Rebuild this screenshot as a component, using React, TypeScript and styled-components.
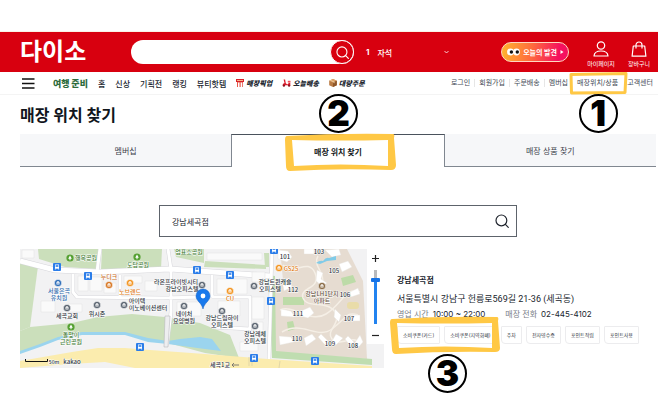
import React from "react";
import styled, { createGlobalStyle, css } from "styled-components";

const Global = createGlobalStyle`
  * { box-sizing: border-box; }
  body {
    margin: 0;
    background: #fff;
    color: #20252e;
    font-family: Inter, "Noto Sans CJK KR", sans-serif;
  }
  button, input { font: inherit; color: inherit; border: 0; padding: 0; margin: 0; background: none; }
  button { cursor: pointer; }
  a { color: inherit; text-decoration: none; }
  h1, h2, p, ul, dl, dd { margin: 0; padding: 0; }
  ul { list-style: none; }
  svg { display: block; flex: none; }
`;

const red = "#d8000f";
const marker = "#ffc845";

const Page = styled.div`
  min-height: 100vh;
  padding-top: 31px;
`;

const Header = styled.header`
  display: flex;
  align-items: center;
  height: 41px;
  padding: 0 5px 0 20px;
  border-top: 1px solid #fbf3e4;
  background: ${red};
  color: #fff;
`;

const Logo = styled.a`
  width: 111px;
  font-size: 24px;
  line-height: 40px;
  font-weight: 700;
`;

const SearchPill = styled.form`
  display: flex;
  flex: 0 1 223px;
  height: 24px;
  border-radius: 12px;
  background: #fff;
`;

const PillInput = styled.input`
  flex: 1;
  min-width: 0;
  padding-left: 12px;
  font-size: 9px;
  color: #222;
  outline: none;
`;

const PillButton = styled.button`
  display: grid;
  place-items: center;
  width: 24px;
  height: 24px;
  border: 1px solid #fff;
  border-radius: 50%;
  background: ${red};
`;

const Keyword = styled.button`
  display: flex;
  align-items: center;
  gap: 8px;
  flex: 0 1 83px;
  margin-left: 12px;
  font-size: 8px;
  font-weight: 500;

  svg { margin-left: auto; }
`;

const Discover = styled.a`
  display: flex;
  align-items: center;
  gap: 3px;
  height: 20px;
  margin-left: auto;
  padding: 0 4px 0 5px;
  border: 1px solid #ffd9c0;
  border-radius: 10px;
  background: linear-gradient(100deg, #ffb62e, #ff6a3d 45%, #f5105f 85%);
  font-size: 7px;
  font-weight: 700;
  white-space: nowrap;
`;

const IconLink = styled.a`
  display: flex;
  flex-direction: column;
  align-items: center;
  gap: 3px;
  width: 28px;
  padding-top: 4px;
  font-size: 6px;
  line-height: 8px;
  white-space: nowrap;
`;

const IconLinks = styled.div`
  display: flex;
  gap: 10px;
  margin-left: 18px;
`;

const Nav = styled.nav`
  display: flex;
  align-items: center;
  height: 23px;
  padding: 0 5px 0 22px;
  border-bottom: 1px solid #f4f4f4;
  white-space: nowrap;
`;

const MenuButton = styled.button`
  margin-right: 18px;
`;

const NavList = styled.ul`
  display: flex;
  align-items: center;
  gap: 10px;
`;

const NavLink = styled.a<{ $kind?: "theme" | "service" }>`
  display: flex;
  align-items: center;
  gap: 2px;
  font-size: 8px;
  font-weight: 500;
  ${({ $kind }) => $kind === "theme" && css`
    font-size: 9px;
    font-weight: 900;
    color: #2d6b3c;
  `}
  ${({ $kind }) => $kind === "service" && css`
    font-size: 7px;
    font-weight: 900;
    font-style: italic;
  `}
`;

const UtilList = styled.ul`
  display: flex;
  align-items: center;
  gap: 9px;
  margin-left: auto;
  font-size: 7px;
  line-height: 10px;
  color: #444a55;
`;

const UtilItem = styled.li<{ $line?: boolean }>`
  position: relative;
  ${({ $line }) => $line && css`
    &::before {
      content: "";
      position: absolute;
      left: -5px;
      top: 1px;
      width: 1px;
      height: 8px;
      background: #e6e6e6;
    }
  `}
`;

const Marker = styled.svg<{ $x: number; $y: number }>`
  position: absolute;
  z-index: 2;
  left: -${({ $x }) => $x}px;
  top: -${({ $y }) => $y}px;
  overflow: visible;
  pointer-events: none;
`;

const Step = styled.span<{ $side: "above" | "below"; $gap: number }>`
  position: absolute;
  z-index: 3;
  left: 50%;
  ${({ $side, $gap }) => ($side === "above" ? `bottom: calc(100% + ${$gap}px);` : `top: calc(100% + ${$gap}px);`)}
  display: grid;
  place-items: center;
  width: 39px;
  height: 39px;
  margin-left: -19px;
  border: 2px solid #000;
  border-radius: 50%;
  background: #fff;
  color: #000;
  font: 900 35px/35px Inter, sans-serif;
`;

const Main = styled.main`
  padding: 0 2px 43px 20px;
`;

const Title = styled.h1`
  padding: 8px 0 7px;
  font-size: 16px;
  line-height: 24px;
  font-weight: 700;
  color: #11151c;
`;

const Tabs = styled.div`
  display: flex;
`;

const Tab = styled.button<{ $active?: boolean }>`
  position: relative;
  flex: 1;
  height: 33px;
  border-bottom: 1px solid #808790;
  background: #f6f7f9;
  font-size: 8px;
  color: #3c434d;
  ${({ $active }) => $active && css`
    border: 1px solid #808790;
    border-top-color: #4a525c;
    border-bottom: 0;
    background: #fff;
    font-weight: 700;
    color: #151a22;
  `}
`;

const TabLabel = styled.span`
  position: relative;
`;

const StoreSearch = styled.form`
  display: flex;
  align-items: center;
  width: 100%;
  max-width: 358px;
  height: 32px;
  margin: 38px auto 12px;
  padding: 0 7px 0 12px;
  border: 1px solid #5d636b;
`;

const StoreInput = styled.input`
  flex: 1;
  min-width: 0;
  font-size: 8px;
  outline: none;
`;

const Result = styled.section`
  display: grid;
  grid-template-columns: 7fr 5fr;
  gap: 12px;
`;

const MapBox = styled.div`
  position: relative;
  height: 119px;
  overflow: hidden;
`;

const MapSvg = styled.svg`
  width: 100%;
  height: 100%;
  font-family: "Noto Sans CJK KR", sans-serif;
  font-size: 6px;
  text-anchor: middle;

  text {
    paint-order: stroke;
    stroke: #fff;
    stroke-width: 1px;
    stroke-linejoin: round;
    fill: #2f3640;
    font-weight: 500;
  }
`;

const Zoomer = styled.div`
  position: absolute;
  top: 0;
  right: 0;
  display: flex;
  flex-direction: column;
  align-items: center;
  justify-content: space-between;
  width: 17px;
  height: 95px;
  background: #fffffff0;
`;

const ZoomButton = styled.button`
  display: grid;
  place-items: center;
  width: 17px;
  height: 18px;
`;

const ZoomRange = styled.input`
  appearance: none;
  writing-mode: vertical-lr;
  direction: rtl;
  width: 9px;
  height: 54px;

  &::-webkit-slider-runnable-track {
    width: 3px;
    height: 54px;
    background: linear-gradient(#b8babd 18%, #2283f0 18%);
  }
  &::-webkit-slider-thumb {
    appearance: none;
    width: 9px;
    height: 4px;
    margin-left: -3px;
    border-radius: 1px;
    background: #1673e6;
  }
`;

const Info = styled.div`
  padding: 24px 0 0 1px;
  white-space: nowrap;
`;

const StoreName = styled.h2`
  font-size: 8px;
  line-height: 14px;
  font-weight: 700;
`;

const Address = styled.p`
  margin-top: 5px;
  font-family: Roboto, "Noto Sans CJK KR", sans-serif;
  font-size: 9px;
  line-height: 14px;
`;

const Facts = styled.dl`
  display: flex;
  gap: 20px;
  margin-top: 2px;
  font-size: 8px;
  line-height: 12px;

  div { display: flex; gap: 4px; }
  dt { color: #777d86; }
`;

const TagRow = styled.div`
  display: flex;
  gap: 4px;
  margin-top: 6px;
`;

const CouponTags = styled.ul`
  position: relative;
  display: flex;
  gap: 4px;
`;

const Tags = styled.ul`
  display: flex;
  gap: 4px;
`;

const Tag = styled.li`
  height: 18px;
  padding: 0 5px;
  border: 1px solid #ececee;
  border-radius: 1px 1px 1px 4px;
  font-size: 5px;
  line-height: 16px;
  color: #30353e;
`;

const Magnifier = ({ size, color }: { size: number; color: string }) => (
  <svg width={size} height={size} viewBox="0 0 14 14" fill="none" stroke={color} strokeWidth="1.2" strokeLinecap="round">
    <circle cx="6.4" cy="6.4" r="5.4" />
    <path d="M10.4 10.4 13.3 13.3" />
  </svg>
);

const StoreIcon = () => (
  <svg width="8" height="8" viewBox="0 0 8 8">
    <path d="M0 0h8v3H0z" fill="#d8202a" />
    <path d="M1 3h6v5H1z" fill="#e8574a" />
    <path d="M2 3.5h1.5V8H2zM4.7 3.5h1.5V8H4.7z" fill="#fff" />
    <path d="M1 1h6v.8H1z" fill="#ffd9a0" />
  </svg>
);

const ScooterIcon = () => (
  <svg width="9" height="8" viewBox="0 0 9 8" fill="none">
    <path d="M1.6.6h1.5l.7 3.6 1.2 1.1h1l.7-1.5h1.6v2.400H.8V5l1.700-1z" fill="#dc1c2c" />
    <circle cx="1.900" cy="6.600" r="1.200" fill="#8d1220" />
    <circle cx="7.100" cy="6.600" r="1.200" fill="#8d1220" />
    <path d="M5.800 1.800h2.700v1.700H5.800z" fill="#ef4a55" />
  </svg>
);

const BoxIcon = () => (
  <svg width="8" height="8" viewBox="0 0 8 8">
    <path d="M4 0 7.8 1.7v4.6L4 8 .2 6.3V1.7z" fill="#b97a42" />
    <path d="M4 0 7.8 1.7 4 3.4.2 1.7z" fill="#dfa468" />
    <path d="M4 3.4 7.8 1.7v4.6L4 8z" fill="#8f5729" />
    <path d="M1.6 1 5.5 2.8v1.5l-1-.3V3L.9 1.5z" fill="#f0d3a8" />
  </svg>
);

const services = [
  { label: "매장픽업", icon: <StoreIcon /> },
  { label: "오늘배송", icon: <ScooterIcon /> },
  { label: "대량주문", icon: <BoxIcon /> },
];

const Bus = ({ x, y }: { x: number; y: number }) => (
  <g transform={`translate(${x} ${y})`}>
    <rect x="-4" y="-4" width="8" height="8" rx="1" fill="#2b7de9" />
    <path d="M-2-2.5h4v4.2h-4z" fill="#fff" />
    <path d="M-1.4-1.8h2.8v1.6h-2.8z" fill="#2b7de9" />
    <path d="M-1.6 1.5v1M1.6 1.5v1" stroke="#fff" strokeWidth=".8" />
  </g>
);

const Poi = ({ x, y, color = "#59636f" }: { x: number; y: number; color?: string }) => (
  <g>
    <circle cx={x} cy={y} r="3.6" fill={color} stroke="#fff" strokeWidth=".5" />
    <path d={`M${x - 1.5} ${y + 1.6}v-2.6l1.5-1 1.5 1v2.6z`} fill="#fff" />
    <circle cx={x} cy={y + 0.2} r=".6" fill={color} />
  </g>
);

const Tree = ({ x, y }: { x: number; y: number }) => (
  <g>
    <circle cx={x} cy={y} r="3.6" fill="#55a032" />
    <path d={`M${x} ${y - 2.4}l1.8 3.2h-1.3v1.4h-1v-1.4h-1.3z`} fill="#fff" />
  </g>
);

const places: { x: number; y: number; lines: string[]; color?: string }[] = [
  { x: 86, y: 260, lines: ["행복공원"], color: "#447c35" },
  { x: 138, y: 267, lines: ["도담공원"], color: "#447c35" },
  { x: 189, y: 254, lines: ["엄표소공원"], color: "#447c35" },
  { x: 109, y: 279, lines: ["누디크"], color: "#c96818" },
  { x: 130, y: 294, lines: ["노브랜드"], color: "#e07a12" },
  { x: 59, y: 293, lines: ["서울은곡", "유치원"], color: "#2c69ac" },
  { x: 67, y: 318, lines: ["세곡교회"] },
  { x: 97, y: 316, lines: ["위시존"] },
  { x: 137, y: 303, lines: ["아이텍"] },
  { x: 148, y: 310, lines: ["이노베이션센터"] },
  { x: 176, y: 284, lines: ["라온프라이빗시티"] },
  { x: 182, y: 291, lines: ["강남오피스텔"] },
  { x: 184, y: 316, lines: ["네이처", "요양병원"] },
  { x: 71, y: 337, lines: ["돌맞이", "근린공원"], color: "#447c35" },
  { x: 230, y: 301, lines: ["CU"], color: "#e07a12" },
  { x: 291, y: 271, lines: ["GS25"], color: "#e07a12" },
  { x: 275, y: 284, lines: ["강남트윈캐슬"] },
  { x: 270, y: 291, lines: ["오피스텔"] },
  { x: 222, y: 320, lines: ["강남드림하이", "오피스텔"] },
  { x: 255, y: 336, lines: ["강남레체", "오피스텔"] },
  { x: 322, y: 296, lines: ["강남LH1단지", "아파트"], color: "#67533f" },
  { x: 220, y: 367, lines: ["세곡1교"] },
];

const blocks: [string, number, number][] = [
  ["101", 285, 259], ["103", 319, 254], ["105", 334, 273], ["112", 293, 292], ["106", 345, 297],
  ["111", 298, 316], ["107", 349, 321], ["110", 297, 341], ["109", 330, 346], ["108", 353, 348],
];

const streets = "M100 249 97 272M168 249 171 269M73 274v18l4 5 85 1 42-1M120 275v22M171 270v42l-4 33M212 297v-22M272 249l-3 110M212 297h38v32l-38-2";

const StoreMap = () => (
  <MapSvg viewBox="20 249 365 119" preserveAspectRatio="xMinYMin slice" role="img" aria-label="강남세곡점 지도">
    <rect x="20" y="249" width="400" height="119" fill="#f2f2f3" />
    <path d="M20 262 38 266 30 327 20 331z" fill="#cde0be" />
    <path d="M38 249h62l-3 20-32-2-26-8zM102 249h60l-1 20-60 1zM174 249h30v14l-28-6z" fill="#cbdfbb" />
    <path d="M205 261 266 265v4l-62-2zM264 253h5v14h-4z" fill="#cbdfbb" />
    <path d="M20 331 30 327 72 323 98 317 132 314 165 317 200 323 230 335 239 358 205 353 168 343 148 340 125 334 82 334 58 338 20 353z" fill="#cbdfbb" />
    <path d="M20 351 40 344 58 337 82 332 125 332 148 338 168 341 180 339 200 337 212 339 221 351 205 349 190 347 168 344 148 342 125 335 82 335 58 340 40 347 20 354z" fill="#9bd4ee" />
    <path d="M20 361 72 352 98 348 125 348 150 350 205 354 268 359 372 366v2H135l-30-6-35 2-50 4z" fill="#fbecae" />
    <path d="M280 249h67l16 32 4 78-92-7-4-64 12-8z" fill="#e6dcd1" />
    <path d="M268 275 275 276 276 351 372 359v6l-100-7z" fill="#bfddb0" />
    <path d="M283 297h21v8h-21zM341 278l12-3 3 7-13 4zM287 322l6-1 2 8-7 2z" fill="#bddba8" />
    <g fill="none" stroke="#d6d6da" strokeLinejoin="round">
      <path d="M20 261 55 270 100 272 170 269 270 276" strokeWidth="6" />
      <path d={streets} strokeWidth="4" />
    </g>
    <g fill="none" stroke="#fff" strokeLinejoin="round">
      <path d="M20 261 55 270 100 272 170 269 270 276" strokeWidth="5" />
      <path d={streets} strokeWidth="3" />
    </g>
    <g fill="none" stroke="#f5efe6" strokeWidth="1.5">
      <path d="M283 265c10 12 25-8 32 8s-16 14-12 25 25 2 32 14-10 18-3 27 20-5 28 4" />
      <path d="M280 310c14-6 30 14 46 4s20-28 34-22M282 332c20-12 35 8 50-3s14-18 26-14M318 256c-6 10 8 16 4 28" />
    </g>
    <g fill="#fafafa" stroke="#e0e0e3" strokeWidth=".5">
      <path d="M78 276h10v15H78zM90 277h12v14H90zM104 283h12v10h-12zM124 276h18v7h-18zM145 281h12v10h-12zM41 301h14v11H41zM68 304h14v8H68zM177 302h24v14h-24zM217 279h30v15h-30zM218 301h22v15h-22zM252 272h13v10h-13zM252 297h12v22h-12zM253 322h10v12h-10zM240 342h18v9h-18zM207 253h55v7h-55zM22 250h12v8H22z" />
    </g>
    <g fill="#fff" stroke="#e3e0dc" strokeWidth=".4">
      <path d="M278 250l10 1 4 6-5 5-9-3zM304 249h10v5h-10zM325 250l14-1 2 6-9 2zM317 270l6 3-2 6 6 4-5 3-6-5zM339 264l9-3 4 6-10 5zM282 281l7-3 3 9-8 4zM281 309l10 2 4 6-14-1zM301 311l9-4 4 6-6 5-8-2zM335 309l6 6-2 7-5-5zM350 292l8-4 2 6-9 3zM353 315h7v6h-8zM279 336l12 1 3 5-14 3zM304 338l8-4 4 5-10 7zM321 334l8 8-3 4-8-9zM336 334l7 4-7 7-4-4zM348 336l6 6-3 5-6-8zM360 335l3 7-6 7-3-5z" />
    </g>
    <path d="M316 263q4-3 7-2 3-4 6-3l7-2v4l-9 1-7 3z" fill="#80cbe8" />
    <rect x="347" y="302" width="12" height="7" rx="3" fill="#e9dca9" />
    <path d="M165 316h5l-2 31h-4z" fill="#eeeef0" stroke="#b9b9bd" strokeWidth=".6" />
    <path d="M249 357v9M252 357v9M280 361l-1 7" stroke="#d8cfa4" strokeWidth=".7" />
    <path d="M232 365h7m-7 0 2-2m-2 2 2 2" stroke="#666" strokeWidth=".8" fill="none" />

    {[[57, 267], [88, 276], [140, 347], [197, 270], [230, 275], [271, 301], [254, 358], [315, 361], [274, 250]].map(([x, y]) => (
      <Bus key={`${x}-${y}`} x={x} y={y} />
    ))}
    {[[70, 258], [137, 257], [71, 327]].map(([x, y]) => <Tree key={x + y} x={x} y={y} />)}
    {[[67, 308], [97, 305], [124, 305], [184, 306], [202, 285], [222, 311], [254, 286], [255, 326]].map(([x, y]) => (
      <Poi key={`${x}-${y}`} x={x} y={y} />
    ))}
    <Poi x={58} y={283} color="#2b6cb8" />
    <Poi x={109} y={285} color="#d77622" />
    <Poi x={130} y={283} color="#f2931e" />
    <Poi x={230} y={291} color="#f2931e" />
    <Poi x={279} y={268} color="#f2931e" />
    <Poi x={322} y={286} color="#8a6b45" />

    {places.map((p) =>
      p.lines.map((line, i) => (
        <text key={line + p.x} x={p.x} y={p.y + i * 7} style={{ fill: p.color }}>{line}</text>
      )),
    )}
    {blocks.map(([n, x, y]) => <text key={n} x={x} y={y}>{n}</text>)}

    <path d="M203 309c-1-6-7-8-7-13a7 7 0 0 1 14 0c0 5-6 7-7 13z" fill="#1979ec" stroke="#0f5cc0" strokeWidth=".5" />
    <circle cx="203" cy="296" r="2.4" fill="#fff" />
    <path d="M25.5 359v2.5h22V359" fill="none" stroke="#111" />
    <text x="54" y="364" fontSize="5">50m</text>
    <text x="72" y="364" fontSize="6">kakao</text>
  </MapSvg>
);

export default function App() {
  return (
    <Page>
      <Global />
      <Header>
        <Logo href="#">다이소</Logo>
        <SearchPill onSubmit={(e) => e.preventDefault()}>
          <PillInput aria-label="상품 검색" />
          <PillButton aria-label="검색"><Magnifier size={13} color="#fff" /></PillButton>
        </SearchPill>
        <Keyword>
          <b>1</b>
          <span>자석</span>
          <svg width="5" height="4" viewBox="0 0 5 4" fill="none" stroke="#fff" strokeWidth=".8"><path d="M.5 1 2.5 3l2-2" /></svg>
        </Keyword>
        <Discover href="#">
          <svg width="13" height="8" viewBox="0 0 13 8">
            <circle cx="3.5" cy="4" r="3.4" fill="#fff" />
            <circle cx="9.5" cy="4" r="3.4" fill="#fff" />
            <circle cx="4.4" cy="4" r="1.7" fill="#111" />
            <circle cx="10.3" cy="4" r="1.7" fill="#111" />
          </svg>
          오늘의 발견
          <svg width="4" height="4" viewBox="0 0 4 4"><path d="M.5 0 3.5 2l-3 2z" fill="#fff" /></svg>
        </Discover>
        <IconLinks>
          <IconLink href="#">
            <svg width="16" height="16" viewBox="0 0 16 16" fill="none" stroke="#fff" strokeWidth="1.2">
              <circle cx="8" cy="4.5" r="3.7" />
              <path d="M1 15c.3-3.6 3-5 7-5s6.700 1.400 7 5z" strokeLinejoin="round" />
            </svg>
            마이페이지
          </IconLink>
          <IconLink href="#">
            <svg width="16" height="16" viewBox="0 0 16 16" fill="none" stroke="#fff" strokeWidth="1.2">
              <path d="M2.3 5h11.4l1.2 10.2H1.100z" strokeLinejoin="round" />
              <path d="M5 7.500V4a3 3 0 0 1 6 0v3.500" />
            </svg>
            장바구니
          </IconLink>
        </IconLinks>
      </Header>

      <Nav>
        <MenuButton aria-label="전체 메뉴">
          <svg width="13" height="11" viewBox="0 0 13 11" stroke="#111" strokeWidth="1.4"><path d="M0 1h12.500M0 5.500h12.500M0 10h12.500" /></svg>
        </MenuButton>
        <NavList>
          <li><NavLink href="#" $kind="theme">여행 준비</NavLink></li>
          {["홈", "신상", "기획전", "랭킹", "뷰티핫템"].map((t) => (
            <li key={t}><NavLink href="#">{t}</NavLink></li>
          ))}
          {services.map((s) => (
            <li key={s.label}><NavLink href="#" $kind="service">{s.icon}{s.label}</NavLink></li>
          ))}
        </NavList>
        <UtilList>
          <UtilItem><a href="#">로그인</a></UtilItem>
          <UtilItem $line><a href="#">회원가입</a></UtilItem>
          <UtilItem $line><a href="#">주문배송</a></UtilItem>
          <UtilItem $line><a href="#">멤버십</a></UtilItem>
          <UtilItem>
            <a href="#">매장위치/상품</a>
            <Marker $x={8} $y={6} width="59" height="23" viewBox="0 0 59 23" aria-hidden="true">
              <path d="M2 2.5 57 1.500 56 20.500 2.500 21z" fill="none" stroke={marker} strokeWidth="3" strokeLinejoin="round" />
            </Marker>
            <Step $side="below" $gap={6}>1</Step>
          </UtilItem>
          <UtilItem><a href="#">고객센터</a></UtilItem>
        </UtilList>
      </Nav>

      <Main>
        <Title>매장 위치 찾기</Title>
        <Tabs role="tablist">
          <Tab role="tab">멤버십</Tab>
          <Tab role="tab" aria-selected="true" $active>
            <TabLabel>
              매장 위치 찾기
              <Marker $x={29} $y={13} width="111" height="37" viewBox="0 0 111 37" aria-hidden="true">
                <path
                  d="M2 2Q55-1 108 0 110 0 109 4L111 31Q111 36 106 36 55 34 5 37 1 37 1 32L0 6Q0 2 2 2zM7 6 9 32Q55 29 103 32L103 6Q55 7 7 6z"
                  fill={marker}
                  fillRule="evenodd"
                />
              </Marker>
            </TabLabel>
            <Step $side="above" $gap={2}>2</Step>
          </Tab>
          <Tab role="tab">매장 상품 찾기</Tab>
        </Tabs>

        <StoreSearch onSubmit={(e) => e.preventDefault()}>
          <StoreInput aria-label="매장 검색" defaultValue="강남세곡점" />
          <button aria-label="매장 검색하기"><Magnifier size={14} color="#20252e" /></button>
        </StoreSearch>

        <Result>
          <MapBox>
            <StoreMap />
            <Zoomer>
              <ZoomButton aria-label="확대">
                <svg width="7" height="7" viewBox="0 0 7 7" stroke="#222" strokeWidth="1.2"><path d="M0 3.500h7M3.500 0v7" /></svg>
              </ZoomButton>
              <ZoomRange type="range" min="0" max="100" defaultValue="84" aria-label="지도 확대 수준" />
              <ZoomButton aria-label="축소">
                <svg width="7" height="7" viewBox="0 0 7 7" stroke="#222" strokeWidth="1.2"><path d="M0 3.500h7" /></svg>
              </ZoomButton>
            </Zoomer>
          </MapBox>
          <Info>
            <StoreName>강남세곡점</StoreName>
            <Address>서울특별시 강남구 헌릉로569길 21-36 (세곡동)</Address>
            <Facts>
              <div><dt>영업 시간</dt><dd>10:00 ~ 22:00</dd></div>
              <div><dt>매장 전화</dt><dd>02-445-4102</dd></div>
            </Facts>
            <TagRow>
              <CouponTags>
                <Tag>소비쿠폰(카드)</Tag>
                <Tag>소비쿠폰(지역화폐)</Tag>
                <Marker $x={7} $y={9} width="110" height="37" viewBox="0 0 110 37" aria-hidden="true">
                  <path
                    d="M2 2Q55-1 107 0 109 0 108 4L110 31Q110 35 105 35 55 34 6 37 2 37 2 32L0 6Q0 2 2 2zM7 6 9 31Q55 28 102 31L102 6Q55 7 7 6z"
                    fill={marker}
                    fillRule="evenodd"
                  />
                </Marker>
                <Step $side="below" $gap={10}>3</Step>
              </CouponTags>
              <Tags>
                {["주차", "전자영수증", "포인트적립", "포인트사용"].map((t) => <Tag key={t}>{t}</Tag>)}
              </Tags>
            </TagRow>
          </Info>
        </Result>
      </Main>
    </Page>
  );
}
